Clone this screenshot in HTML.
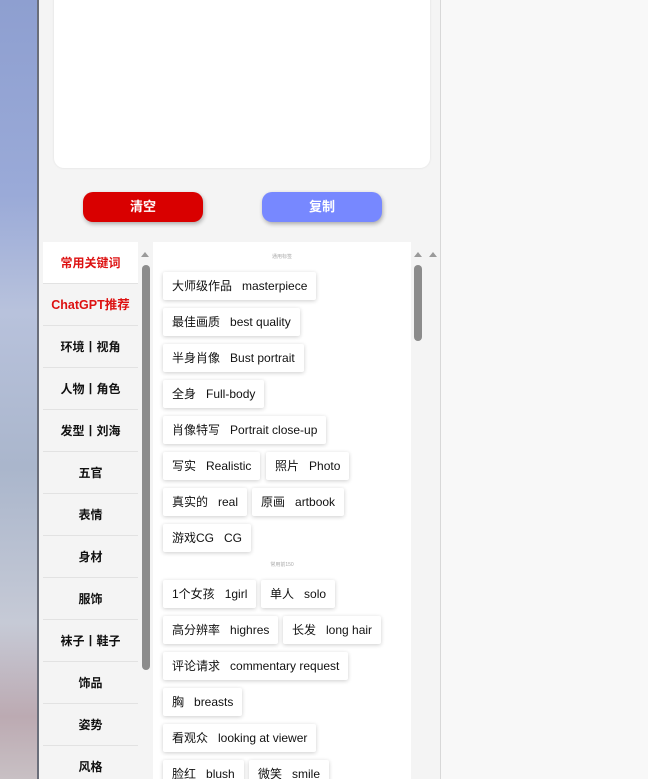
<!DOCTYPE html>
<html><head><meta charset="utf-8"><style>
*{margin:0;padding:0;box-sizing:border-box}
html,body{width:648px;height:779px;overflow:hidden}
body{background:#f8f8f8;font-family:"Liberation Sans","Noto Sans CJK SC",sans-serif;position:relative}
.sky{position:absolute;left:0;top:0;width:37px;height:779px;background:linear-gradient(180deg,#8e9fd0 0%,#9aaad8 25%,#b8c2dc 40%,#aab6cc 60%,#c6cad6 80%,#bcaab2 92%,#c8c0c4 100%)}
.edge{position:absolute;left:37px;top:0;width:2px;height:779px;background:#6a6e7a}
.panel{position:absolute;left:39px;top:0;width:402px;height:779px;background:#f4f4f4;border-right:1px solid #d8d8d8}
.ta{position:absolute;left:54px;top:-10px;width:376px;height:178px;background:#fff;border-radius:10px;box-shadow:0 0 2px #ddd}
.btn{position:absolute;top:192px;width:120px;height:30px;border-radius:10px;color:#fff;font-weight:bold;font-size:13px;text-align:center;line-height:30px;box-shadow:1px 2px 4px rgba(0,0,0,.3)}
.side{position:absolute;left:43px;top:242px;width:95px;height:537px;overflow:hidden}
.side div{height:42px;line-height:42px;text-align:center;font-size:12px;font-weight:bold;color:#111;border-bottom:1px solid #e2e2e2;background:#f4f4f4}
.side div.a{background:#fff;color:#d11}
.side div.r{color:#d11;font-size:12.5px}
.track{position:absolute;width:14px;top:242px;height:537px;background:#f4f4f4}
.thumb{position:absolute;width:8px;background:#8c8c8c;border-radius:4px}
.arr{position:absolute;width:0;height:0;border-left:4px solid transparent;border-right:4px solid transparent;border-bottom:5px solid #9a9a9a}
.content{position:absolute;left:153px;top:242px;width:258px;height:537px;background:#fff;overflow:hidden}
.tag{position:absolute;height:28px;line-height:28px;background:#fff;font-size:12px;color:#111;padding:0 9px;box-shadow:0 1px 4px rgba(0,0,0,.2);border-radius:2px;white-space:nowrap}
.tag b{font-weight:normal;margin-right:10px}
.hd{position:absolute;font-size:5px;color:#aaa;width:258px;text-align:center;left:0}
</style></head><body>
<div class="sky"></div><div class="edge"></div>
<div class="panel"></div>
<div class="ta"></div>
<div class="btn" style="left:83px;background:#d90000">清空</div>
<div class="btn" style="left:262px;background:#7788ff">复制</div>
<div class="side">
<div class="a">常用关键词</div><div class="r">ChatGPT推荐</div><div>环境丨视角</div><div>人物丨角色</div><div>发型丨刘海</div><div>五官</div><div>表情</div><div>身材</div><div>服饰</div><div>袜子丨鞋子</div><div>饰品</div><div>姿势</div><div>风格</div>
</div>
<div class="track" style="left:138px"></div>
<div class="arr" style="left:141px;top:252px"></div>
<div class="thumb" style="left:142px;top:265px;height:405px"></div>
<div class="content">
<div class="hd" style="top:11px">通用标签</div>
<div class="hd" style="top:319px">常用前150</div>
<div class="tag" style="left:10px;top:30px"><b>大师级作品</b>masterpiece</div>
<div class="tag" style="left:10px;top:66px"><b>最佳画质</b>best quality</div>
<div class="tag" style="left:10px;top:102px"><b>半身肖像</b>Bust portrait</div>
<div class="tag" style="left:10px;top:138px"><b>全身</b>Full-body</div>
<div class="tag" style="left:10px;top:174px"><b>肖像特写</b>Portrait close-up</div>
<div class="tag" style="left:10px;top:210px"><b>写实</b>Realistic</div>
<div class="tag" style="left:113px;top:210px"><b>照片</b>Photo</div>
<div class="tag" style="left:10px;top:246px"><b>真实的</b>real</div>
<div class="tag" style="left:99px;top:246px"><b>原画</b>artbook</div>
<div class="tag" style="left:10px;top:282px"><b>游戏CG</b>CG</div>
<div class="tag" style="left:10px;top:338px"><b>1个女孩</b>1girl</div>
<div class="tag" style="left:108px;top:338px"><b>单人</b>solo</div>
<div class="tag" style="left:10px;top:374px"><b>高分辨率</b>highres</div>
<div class="tag" style="left:130px;top:374px"><b>长发</b>long hair</div>
<div class="tag" style="left:10px;top:410px"><b>评论请求</b>commentary request</div>
<div class="tag" style="left:10px;top:446px"><b>胸</b>breasts</div>
<div class="tag" style="left:10px;top:482px"><b>看观众</b>looking at viewer</div>
<div class="tag" style="left:10px;top:518px"><b>脸红</b>blush</div>
<div class="tag" style="left:96px;top:518px"><b>微笑</b>smile</div>
</div>
<div class="arr" style="left:414px;top:252px"></div>
<div class="thumb" style="left:414px;top:265px;height:76px"></div>
<div class="arr" style="left:429px;top:252px"></div>
</body></html>
